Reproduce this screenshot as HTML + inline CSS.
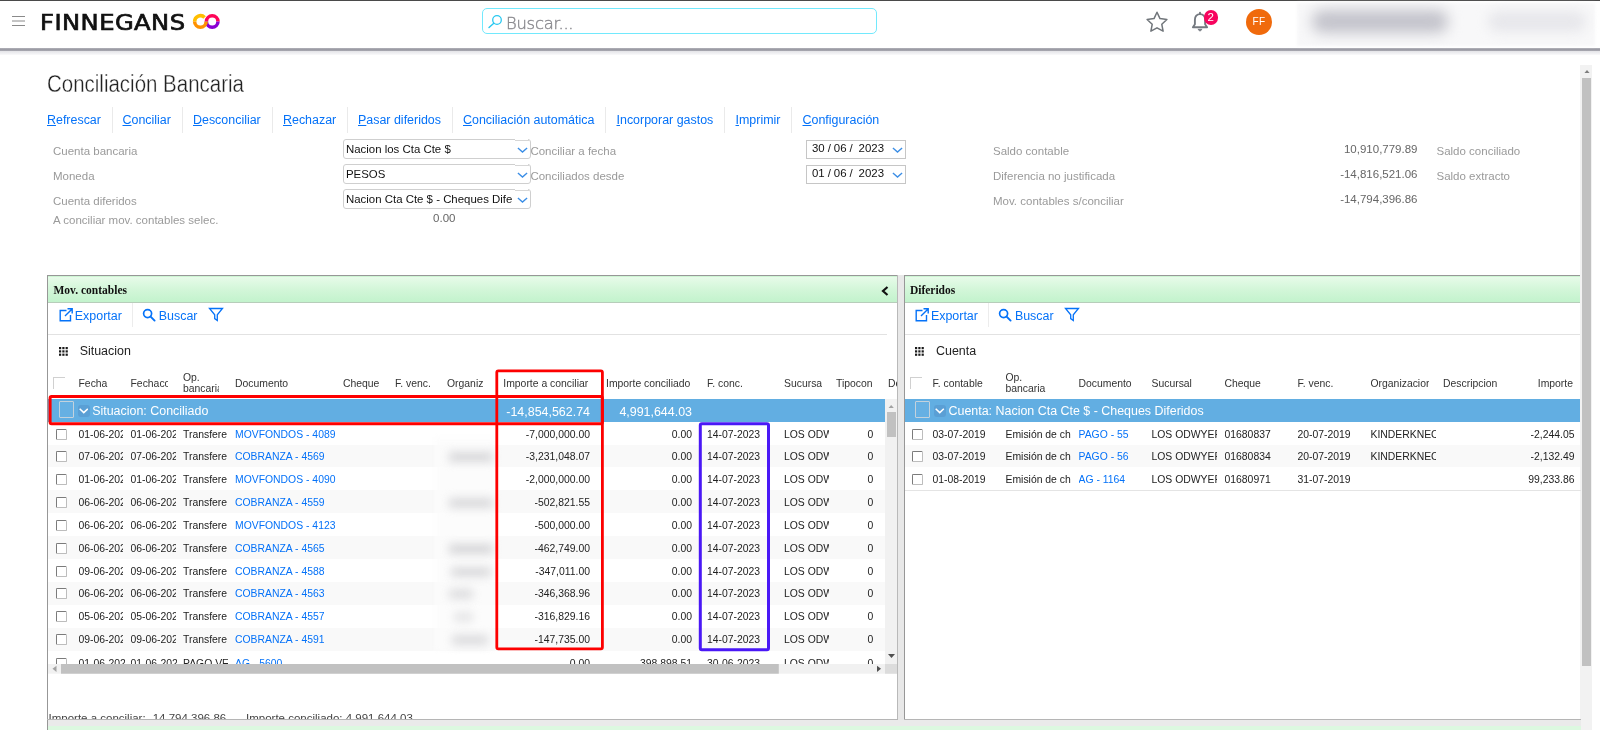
<!DOCTYPE html>
<html lang="es">
<head>
<meta charset="utf-8">
<title>Conciliación Bancaria</title>
<style>
*{box-sizing:border-box;margin:0;padding:0}
html,body{width:1600px;height:730px;overflow:hidden;background:#fff}
body{opacity:.9999;font-family:"Liberation Sans",Arial,sans-serif;font-size:12px;color:#222;position:relative}
.abs{position:absolute}
/* top bar */
#topline{left:0;top:0;width:1600px;height:1px;background:#4a4a4a}
#hdr{left:0;top:2px;width:1600px;height:46px;background:#fff}
#hdrline{left:0;top:48px;width:1600px;height:3px;background:linear-gradient(#b4b4bb,#9b9ba4 45%,#a9a9b1)}
#hdrshadow{left:0;top:51px;width:1600px;height:4px;background:linear-gradient(#e3e3e7,#eeeef1 50%,#fafafb)}
#logo{left:40px;top:10px;transform:scaleX(1.18);transform-origin:0 0;font-family:"DejaVu Sans","Liberation Sans",sans-serif;font-weight:normal;font-size:20.5px;line-height:26px;color:#111;letter-spacing:0.4px;white-space:nowrap;-webkit-text-stroke:0.7px #111}
#search{left:482px;top:8px;width:395px;height:26px;border:1px solid #72e9fd;border-radius:5px;background:#fff}
#searchtxt{left:506px;top:13px;font-family:"DejaVu Sans","Liberation Sans",sans-serif;font-weight:200;font-size:16.4px;line-height:22px;color:#8a8a8f;letter-spacing:-0.25px;-webkit-text-stroke:0.4px #8a8a8f;white-space:nowrap}
#avatar{left:1246px;top:9px;width:26px;height:26px;border-radius:50%;background:#f06a0c;color:#fff;font-size:10px;line-height:26px;text-align:center;letter-spacing:.5px}
#badge{left:1203.5px;top:10.2px;width:14.4px;height:14.4px;border-radius:50%;background:#f7045e;color:#fff;font-size:11.5px;line-height:14.6px;text-align:center}
.blur{filter:blur(4px);border-radius:8px}
/* title + menu */
#title{left:46.500px;top:71px;-webkit-text-stroke:0.35px #fff;font-size:23.3px;line-height:26px;color:#222;transform:scaleX(0.879);transform-origin:0 0;white-space:nowrap;font-weight:normal}
.mi{top:112px;font-size:12.44px;line-height:16px;color:#0572f8;white-space:nowrap}
.mi u{text-decoration:underline}
.msep{top:107px;width:1px;height:26px;background:#eaeaea}
/* form */
.lbl{font-size:11.5px;line-height:14px;color:#9a9a9a;white-space:nowrap}
.val{font-size:11.5px;line-height:14px;color:#666;white-space:nowrap;text-align:right}
.dt{word-spacing:-0.2px;line-height:14.4px !important;height:18.500px !important;border-radius:0 !important;border-color:#c6c6c6 !important}
.sel{height:20px;border:1px solid #cfcfcf;border-radius:3px;background:#fff;font-size:11.43px;line-height:18px;color:#111;padding-left:2px;white-space:nowrap;overflow:hidden}
/*PCSS*/
/* panels */
.pb{background:#979797}
.phead{height:27px;background:linear-gradient(#cdf5d3 0,#cdf5d3 1px,#e7fbe9 1.5px,#e2fae5 4px,#d2f6d8 14px,#c3f3cd 25.500px,#b7cdba 26.200px,#b7cdba 27px)}
.ptitle{font-family:"Liberation Serif","Times New Roman",serif;font-weight:bold;font-size:11.5px;line-height:14px;color:#111;white-space:nowrap}
.tb{font-size:12.44px;line-height:16px;margin-top:.6px;color:#0572f8;white-space:nowrap}
.hline{height:1px;background:#e2e2e2}
.gtxt{font-size:12.44px;line-height:16px;color:#222;white-space:nowrap}
.ch{font-size:10.4px;line-height:11px;color:#333;white-space:nowrap;overflow:hidden}
.cell{font-size:10.4px;line-height:14px;color:#222;white-space:nowrap;overflow:hidden}
.cell.r{text-align:right}
.cell.lk{color:#0572f8}
.row{left:48px;height:23px}
.grp{background:#62aee2}
.gw{font-size:12.44px;line-height:16px;color:#fff;white-space:nowrap}
.cb{width:11.500px;height:11.500px;border:1px solid;border-color:#7b7b7b #bdbdbd #bdbdbd #7b7b7b;border-radius:1.500px;background:#fff}
/*ENDPCSS*/
</style>
</head>
<body>
<div class="abs" id="hdr"></div>
<div class="abs" id="topline"></div>
<div class="abs" id="hdrline"></div>
<div class="abs" id="hdrshadow"></div>
<!-- hamburger -->
<svg class="abs" style="left:12px;top:15px" width="14" height="12" viewBox="0 0 14 12"><path d="M0 1.5h13M0 6h13M0 10.5h13" stroke="#8a8a8a" stroke-width="1" fill="none"/></svg>
<div class="abs" id="logo">FINNEGANS</div>
<div class="abs" id="search"></div>
<div class="abs" id="searchtxt">Buscar...</div>

<!-- logo infinity -->
<svg class="abs" style="left:186px;top:8px" width="40" height="26" viewBox="0 0 40 26">
<g fill="none" stroke-width="3.550">
<path d="M20.420 13.500A5.780 5.780 0 0 1 31.980 13.500" stroke="#ff0558"/>
<path d="M20.420 13.500A5.780 5.780 0 0 0 31.980 13.500" stroke="#8a00d2"/>
<path d="M8.620 13.500A5.780 5.780 0 0 1 18.600 9.550" stroke="#ffbe00"/>
<path d="M8.620 13.500A5.780 5.780 0 0 0 20.180 13.500" stroke="#ff9100"/>
</g>
</svg>
<!-- search icon -->
<svg class="abs" style="left:488px;top:14px" width="15" height="15" viewBox="0 0 15 15"><circle cx="9" cy="6" r="4.3" fill="none" stroke="#29c8f0" stroke-width="1.3"/><path d="M5.8 9.2L1 13.6" stroke="#29c8f0" stroke-width="1.4" stroke-linecap="round"/></svg>
<!-- star -->
<svg class="abs" style="left:1145px;top:10px" width="24" height="23" viewBox="0 0 24 23"><path d="M12 2.2l3 6.4 6.9.9-5.1 4.8 1.3 6.9L12 17.8 5.9 21.2l1.300-6.900L2.1 9.500l6.900-.9z" fill="none" stroke="#70757a" stroke-width="1.5" stroke-linejoin="round"/></svg>
<!-- bell -->
<svg class="abs" style="left:1190px;top:11px" width="20" height="22" viewBox="0 0 20 22"><path d="M10 3.100c-3.100 0-5.100 2.400-5.100 5.600v4.600L2.900 16.200h14.200l-2-2.900V8.700c0-3.200-2-5.600-5.100-5.600z" fill="none" stroke="#747980" stroke-width="1.900" stroke-linejoin="round"/><path d="M7.900 18.300L10 20.200l2.100-1.900z" fill="#747980" stroke="#747980" stroke-width=".8" stroke-linejoin="round"/><path d="M10 1.800v1.300" stroke="#747980" stroke-width="2" stroke-linecap="round"/></svg>
<div class="abs" style="left:1297px;top:3px;width:298px;height:43px;background:#f8f8f9;filter:blur(1.5px)"></div>
<div class="abs" style="left:1312px;top:10px;width:136px;height:23px;background:#c3c3cb;filter:blur(7px);border-radius:10px"></div>
<div class="abs" style="left:1488px;top:11px;width:98px;height:21px;background:#e7e7eb;filter:blur(6px);border-radius:10px"></div>
<div class="abs" id="avatar">FF</div>
<div class="abs" id="badge">2</div>
<div class="abs" id="title">Conciliación Bancaria</div>
<div class="abs mi" style="left:47px"><u>R</u>efrescar</div>
<div class="abs mi" style="left:122.5px"><u>C</u>onciliar</div>
<div class="abs mi" style="left:193px"><u>D</u>esconciliar</div>
<div class="abs mi" style="left:283px"><u>R</u>echazar</div>
<div class="abs mi" style="left:358px"><u>P</u>asar diferidos</div>
<div class="abs mi" style="left:463px"><u>C</u>onciliación automática</div>
<div class="abs mi" style="left:616.5px"><u>I</u>ncorporar gastos</div>
<div class="abs mi" style="left:735.5px"><u>I</u>mprimir</div>
<div class="abs mi" style="left:802.5px"><u>C</u>onfiguración</div>
<div class="abs msep" style="left:112px"></div>
<div class="abs msep" style="left:182px"></div>
<div class="abs msep" style="left:272px"></div>
<div class="abs msep" style="left:347px"></div>
<div class="abs msep" style="left:452px"></div>
<div class="abs msep" style="left:605px"></div>
<div class="abs msep" style="left:724px"></div>
<div class="abs msep" style="left:791px"></div>

<!-- form -->
<div class="abs lbl" style="left:53px;top:144px">Cuenta bancaria</div>
<div class="abs lbl" style="left:53px;top:169px">Moneda</div>
<div class="abs lbl" style="left:53px;top:194px">Cuenta diferidos</div>
<div class="abs lbl" style="left:53px;top:213px">A conciliar mov. contables selec.</div>
<div class="abs sel" style="left:343px;top:139px;width:187.500px">Nacion los Cta Cte $</div>
<div class="abs sel" style="left:343px;top:164px;width:187.500px">PESOS</div>
<div class="abs sel" style="left:343px;top:189px;width:187.500px">Nacion Cta Cte $ - Cheques Dife</div>
<svg class="abs chev" style="left:516.500px;top:146.800px" width="11" height="6.500" viewBox="0 0 12 7"><path d="M1 1l5 4.500L11 1" fill="none" stroke="#3b8ee6" stroke-width="1.500"/></svg>
<svg class="abs chev" style="left:516.500px;top:171.800px" width="11" height="6.500" viewBox="0 0 12 7"><path d="M1 1l5 4.500L11 1" fill="none" stroke="#3b8ee6" stroke-width="1.500"/></svg>
<svg class="abs chev" style="left:516.500px;top:196.800px" width="11" height="6.500" viewBox="0 0 12 7"><path d="M1 1l5 4.500L11 1" fill="none" stroke="#3b8ee6" stroke-width="1.500"/></svg>
<div class="abs" style="left:515px;top:139px;width:13px;height:1px;background:#fff"></div><div class="abs" style="left:515px;top:140px;width:14px;height:1px;background:#d6d6d6"></div>
<div class="abs" style="left:515px;top:164px;width:13px;height:1px;background:#fff"></div><div class="abs" style="left:515px;top:165px;width:14px;height:1px;background:#d6d6d6"></div>
<div class="abs" style="left:515px;top:189px;width:13px;height:1px;background:#fff"></div><div class="abs" style="left:515px;top:190px;width:14px;height:1px;background:#d6d6d6"></div>
<div class="abs val" style="left:419.500px;top:211.300px;width:36px">0.00</div>
<div class="abs lbl" style="left:530.400px;top:144px">Conciliar a fecha</div>
<div class="abs lbl" style="left:530.400px;top:169px">Conciliados desde</div>
<div class="abs sel dt" style="left:806px;top:140px;width:100px;padding-left:5px">30 / 06 /&nbsp; 2023</div>
<div class="abs sel dt" style="left:806px;top:165px;width:100px;padding-left:5px">01 / 06 /&nbsp; 2023</div>
<svg class="abs chev" style="left:892px;top:147px" width="11" height="6.500" viewBox="0 0 12 7"><path d="M1 1l5 4.500L11 1" fill="none" stroke="#3b8ee6" stroke-width="1.500"/></svg>
<svg class="abs chev" style="left:892px;top:172px" width="11" height="6.500" viewBox="0 0 12 7"><path d="M1 1l5 4.500L11 1" fill="none" stroke="#3b8ee6" stroke-width="1.500"/></svg>
<div class="abs lbl" style="left:993px;top:144px">Saldo contable</div>
<div class="abs lbl" style="left:993px;top:169px">Diferencia no justificada</div>
<div class="abs lbl" style="left:993px;top:194px">Mov. contables s/conciliar</div>
<div class="abs val" style="left:1300px;top:142px;width:117.500px">10,910,779.89</div>
<div class="abs val" style="left:1300px;top:167px;width:117.500px">-14,816,521.06</div>
<div class="abs val" style="left:1300px;top:192px;width:117.500px">-14,794,396.86</div>
<div class="abs lbl" style="left:1436.500px;top:144px">Saldo conciliado</div>
<div class="abs lbl" style="left:1436.500px;top:169px">Saldo extracto</div>
<!-- page scrollbar -->
<div class="abs" style="left:1580px;top:65px;width:12px;height:665px;background:#f2f2f2"></div>
<div class="abs" style="left:1582px;top:78px;width:9px;height:588px;background:#c1c1c1"></div>
<svg class="abs" style="left:1583.500px;top:69.800px" width="6" height="3.500" viewBox="0 0 6 3.500"><path d="M0 3.500L3 0l3 3.500z" fill="#7e7e7e"/></svg>
<!--PANELS-->
<div class="abs pb" style="left:47px;top:275px;width:851px;height:1px"></div>
<div class="abs pb" style="left:47px;top:275px;width:1px;height:455px"></div>
<div class="abs phead" style="left:48px;top:276px;width:850px"></div>
<div class="abs ptitle" style="left:53.5px;top:283px">Mov. contables</div>
<svg class="abs" style="left:881px;top:285.500px" width="8" height="10" viewBox="0 0 8 10"><path d="M6.500 1L2 5l4.500 4" fill="none" stroke="#111" stroke-width="2.200"/></svg>
<div class="abs" style="left:897px;top:275px;width:1px;height:445px;background:#b9b9b9"></div>
<div class="abs" style="left:898px;top:275px;width:6px;height:445px;background:#e8e8e8"></div>
<svg class="abs" style="left:58px;top:307px" width="16" height="16" viewBox="0 0 16 16"><path d="M8.500 3.500H2.200v10.300h10.300V8" fill="none" stroke="#0572f8" stroke-width="1.400"/><path d="M7 9L13.800 2.200M9.500 1.800h4.700v4.700" fill="none" stroke="#0572f8" stroke-width="1.400"/></svg>
<div class="abs tb" style="left:74.8px;top:307px">Exportar</div>
<div class="abs" style="left:131.5px;top:303px;width:1px;height:24px;background:#ececec"></div>
<svg class="abs" style="left:142px;top:308px" width="14" height="14" viewBox="0 0 14 14"><circle cx="5.600" cy="5.600" r="4" fill="none" stroke="#0572f8" stroke-width="1.700"/><path d="M8.600 8.600L12.600 12.600" stroke="#0572f8" stroke-width="1.900" stroke-linecap="round"/></svg>
<div class="abs tb" style="left:158.8px;top:307px">Buscar</div>
<svg class="abs" style="left:208px;top:307px" width="16" height="16" viewBox="0 0 16 16"><path d="M1.500 1.500h13L9.300 7.800v5.700L6.700 11.600V7.800z" fill="none" stroke="#0572f8" stroke-width="1.300" stroke-linejoin="miter"/></svg>
<div class="abs hline" style="left:48px;top:334px;width:839px"></div>
<svg class="abs" style="left:58.8px;top:346.8px" width="9" height="9" viewBox="0 0 9 9"><rect x="0.00" y="0.00" width="2.200" height="2.200" fill="#1a1a1a"/><rect x="0.00" y="3.30" width="2.200" height="2.200" fill="#1a1a1a"/><rect x="0.00" y="6.60" width="2.200" height="2.200" fill="#1a1a1a"/><rect x="3.30" y="0.00" width="2.200" height="2.200" fill="#1a1a1a"/><rect x="3.30" y="3.30" width="2.200" height="2.200" fill="#1a1a1a"/><rect x="3.30" y="6.60" width="2.200" height="2.200" fill="#1a1a1a"/><rect x="6.60" y="0.00" width="2.200" height="2.200" fill="#1a1a1a"/><rect x="6.60" y="3.30" width="2.200" height="2.200" fill="#1a1a1a"/><rect x="6.60" y="6.60" width="2.200" height="2.200" fill="#1a1a1a"/></svg>
<div class="abs gtxt" style="left:79.700px;top:343px">Situacion</div>
<div class="abs" style="left:53px;top:377px;width:12px;height:12px;border-top:1px solid #d0d0d0;border-left:1px solid #d0d0d0;border-radius:0"></div>
<div class="abs ch" style="left:78.5px;top:377.500px;width:46px">Fecha</div>
<div class="abs ch" style="left:130.5px;top:377.500px;width:37px">Fechacc</div>
<div class="abs ch" style="left:235px;top:377.500px;width:100px">Documento</div>
<div class="abs ch" style="left:343px;top:377.500px;width:46px">Cheque</div>
<div class="abs ch" style="left:395px;top:377.500px;width:46px">F. venc.</div>
<div class="abs ch" style="left:447px;top:377.500px;width:46px">Organiz</div>
<div class="abs ch" style="left:503.3px;top:377.500px;width:95px">Importe a conciliar</div>
<div class="abs ch" style="left:606px;top:377.500px;width:95px">Importe conciliado</div>
<div class="abs ch" style="left:707px;top:377.500px;width:70px">F. conc.</div>
<div class="abs ch" style="left:784px;top:377.500px;width:38px">Sucursa</div>
<div class="abs ch" style="left:836px;top:377.500px;width:44px">Tipocon</div>
<div class="abs ch" style="left:888px;top:377.500px;width:9px">De</div>
<div class="abs ch" style="left:183px;top:371.800px;width:36px;height:23px;white-space:normal;line-height:11.200px">Op. bancaria</div>
<div class="abs grp" style="left:48px;top:399.300px;width:837px;height:22.400px"></div>
<div class="abs" style="left:59px;top:401.200px;width:15px;height:16.500px;border:1px solid #c3d2dd;background:#66b0e3;border-radius:1px"></div>
<div class="abs" style="left:77.5px;top:405.300px;width:12px;height:11.500px;border-radius:3px;background:#5a9fd5"></div>
<svg class="abs" style="left:78.8px;top:408.200px" width="9.500" height="6" viewBox="0 0 9.500 6"><path d="M.7.800L4.750 4.600 8.800.8" fill="none" stroke="#fff" stroke-width="1.500"/></svg>
<div class="abs gw" style="left:92.2px;top:402.500px">Situacion: Conciliado</div>
<div class="abs gw" style="left:480px;top:403.500px;width:110px;text-align:right">-14,854,562.74</div>
<div class="abs gw" style="left:590px;top:403.500px;width:102px;text-align:right">4,991,644.03</div>
<div class="abs cb" style="left:55.800px;top:428.6px"></div>
<div class="abs cell" style="left:78.500px;top:428.0px;width:44px">01-06-2023</div>
<div class="abs cell" style="left:130.500px;top:428.0px;width:45px">01-06-2023</div>
<div class="abs cell" style="left:183px;top:428.0px;width:43.500px">Transferencia</div>
<div class="abs cell lk" style="left:235px;top:428.0px;width:104px">MOVFONDOS - 4089</div>
<div class="abs cell r" style="left:500px;top:428.0px;width:90px">-7,000,000.00</div>
<div class="abs cell r" style="left:620px;top:428.0px;width:72px">0.00</div>
<div class="abs cell" style="left:707px;top:428.0px;width:70px">14-07-2023</div>
<div class="abs cell" style="left:784px;top:428.0px;width:45px">LOS ODWYER</div>
<div class="abs cell r" style="left:840px;top:428.0px;width:33.200px">0</div>
<div class="abs" style="left:48px;top:445px;width:837px;height:22.0px;background:#f9f9f9"></div>
<div class="abs cb" style="left:55.800px;top:450.6px"></div>
<div class="abs cell" style="left:78.500px;top:450.0px;width:44px">07-06-2023</div>
<div class="abs cell" style="left:130.500px;top:450.0px;width:45px">07-06-2023</div>
<div class="abs cell" style="left:183px;top:450.0px;width:43.500px">Transferencia</div>
<div class="abs cell lk" style="left:235px;top:450.0px;width:104px">COBRANZA - 4569</div>
<div class="abs cell r" style="left:500px;top:450.0px;width:90px">-3,231,048.07</div>
<div class="abs cell r" style="left:620px;top:450.0px;width:72px">0.00</div>
<div class="abs cell" style="left:707px;top:450.0px;width:70px">14-07-2023</div>
<div class="abs cell" style="left:784px;top:450.0px;width:45px">LOS ODWYER</div>
<div class="abs cell r" style="left:840px;top:450.0px;width:33.200px">0</div>
<div class="abs cb" style="left:55.800px;top:473.6px"></div>
<div class="abs cell" style="left:78.500px;top:473.0px;width:44px">01-06-2023</div>
<div class="abs cell" style="left:130.500px;top:473.0px;width:45px">01-06-2023</div>
<div class="abs cell" style="left:183px;top:473.0px;width:43.500px">Transferencia</div>
<div class="abs cell lk" style="left:235px;top:473.0px;width:104px">MOVFONDOS - 4090</div>
<div class="abs cell r" style="left:500px;top:473.0px;width:90px">-2,000,000.00</div>
<div class="abs cell r" style="left:620px;top:473.0px;width:72px">0.00</div>
<div class="abs cell" style="left:707px;top:473.0px;width:70px">14-07-2023</div>
<div class="abs cell" style="left:784px;top:473.0px;width:45px">LOS ODWYER</div>
<div class="abs cell r" style="left:840px;top:473.0px;width:33.200px">0</div>
<div class="abs" style="left:48px;top:490.3px;width:837px;height:22.4px;background:#f9f9f9"></div>
<div class="abs cb" style="left:55.800px;top:496.6px"></div>
<div class="abs cell" style="left:78.500px;top:496.0px;width:44px">06-06-2023</div>
<div class="abs cell" style="left:130.500px;top:496.0px;width:45px">06-06-2023</div>
<div class="abs cell" style="left:183px;top:496.0px;width:43.500px">Transferencia</div>
<div class="abs cell lk" style="left:235px;top:496.0px;width:104px">COBRANZA - 4559</div>
<div class="abs cell r" style="left:500px;top:496.0px;width:90px">-502,821.55</div>
<div class="abs cell r" style="left:620px;top:496.0px;width:72px">0.00</div>
<div class="abs cell" style="left:707px;top:496.0px;width:70px">14-07-2023</div>
<div class="abs cell" style="left:784px;top:496.0px;width:45px">LOS ODWYER</div>
<div class="abs cell r" style="left:840px;top:496.0px;width:33.200px">0</div>
<div class="abs cb" style="left:55.800px;top:519.6px"></div>
<div class="abs cell" style="left:78.500px;top:519.0px;width:44px">06-06-2023</div>
<div class="abs cell" style="left:130.500px;top:519.0px;width:45px">06-06-2023</div>
<div class="abs cell" style="left:183px;top:519.0px;width:43.500px">Transferencia</div>
<div class="abs cell lk" style="left:235px;top:519.0px;width:104px">MOVFONDOS - 4123</div>
<div class="abs cell r" style="left:500px;top:519.0px;width:90px">-500,000.00</div>
<div class="abs cell r" style="left:620px;top:519.0px;width:72px">0.00</div>
<div class="abs cell" style="left:707px;top:519.0px;width:70px">14-07-2023</div>
<div class="abs cell" style="left:784px;top:519.0px;width:45px">LOS ODWYER</div>
<div class="abs cell r" style="left:840px;top:519.0px;width:33.200px">0</div>
<div class="abs" style="left:48px;top:536px;width:837px;height:23.0px;background:#f9f9f9"></div>
<div class="abs cb" style="left:55.800px;top:542.6px"></div>
<div class="abs cell" style="left:78.500px;top:542.0px;width:44px">06-06-2023</div>
<div class="abs cell" style="left:130.500px;top:542.0px;width:45px">06-06-2023</div>
<div class="abs cell" style="left:183px;top:542.0px;width:43.500px">Transferencia</div>
<div class="abs cell lk" style="left:235px;top:542.0px;width:104px">COBRANZA - 4565</div>
<div class="abs cell r" style="left:500px;top:542.0px;width:90px">-462,749.00</div>
<div class="abs cell r" style="left:620px;top:542.0px;width:72px">0.00</div>
<div class="abs cell" style="left:707px;top:542.0px;width:70px">14-07-2023</div>
<div class="abs cell" style="left:784px;top:542.0px;width:45px">LOS ODWYER</div>
<div class="abs cell r" style="left:840px;top:542.0px;width:33.200px">0</div>
<div class="abs cb" style="left:55.800px;top:565.6px"></div>
<div class="abs cell" style="left:78.500px;top:565.0px;width:44px">09-06-2023</div>
<div class="abs cell" style="left:130.500px;top:565.0px;width:45px">09-06-2023</div>
<div class="abs cell" style="left:183px;top:565.0px;width:43.500px">Transferencia</div>
<div class="abs cell lk" style="left:235px;top:565.0px;width:104px">COBRANZA - 4588</div>
<div class="abs cell r" style="left:500px;top:565.0px;width:90px">-347,011.00</div>
<div class="abs cell r" style="left:620px;top:565.0px;width:72px">0.00</div>
<div class="abs cell" style="left:707px;top:565.0px;width:70px">14-07-2023</div>
<div class="abs cell" style="left:784px;top:565.0px;width:45px">LOS ODWYER</div>
<div class="abs cell r" style="left:840px;top:565.0px;width:33.200px">0</div>
<div class="abs" style="left:48px;top:582.3px;width:837px;height:22.7px;background:#f9f9f9"></div>
<div class="abs cb" style="left:55.800px;top:587.6px"></div>
<div class="abs cell" style="left:78.500px;top:587.0px;width:44px">06-06-2023</div>
<div class="abs cell" style="left:130.500px;top:587.0px;width:45px">06-06-2023</div>
<div class="abs cell" style="left:183px;top:587.0px;width:43.500px">Transferencia</div>
<div class="abs cell lk" style="left:235px;top:587.0px;width:104px">COBRANZA - 4563</div>
<div class="abs cell r" style="left:500px;top:587.0px;width:90px">-346,368.96</div>
<div class="abs cell r" style="left:620px;top:587.0px;width:72px">0.00</div>
<div class="abs cell" style="left:707px;top:587.0px;width:70px">14-07-2023</div>
<div class="abs cell" style="left:784px;top:587.0px;width:45px">LOS ODWYER</div>
<div class="abs cell r" style="left:840px;top:587.0px;width:33.200px">0</div>
<div class="abs cb" style="left:55.800px;top:610.6px"></div>
<div class="abs cell" style="left:78.500px;top:610.0px;width:44px">05-06-2023</div>
<div class="abs cell" style="left:130.500px;top:610.0px;width:45px">05-06-2023</div>
<div class="abs cell" style="left:183px;top:610.0px;width:43.500px">Transferencia</div>
<div class="abs cell lk" style="left:235px;top:610.0px;width:104px">COBRANZA - 4557</div>
<div class="abs cell r" style="left:500px;top:610.0px;width:90px">-316,829.16</div>
<div class="abs cell r" style="left:620px;top:610.0px;width:72px">0.00</div>
<div class="abs cell" style="left:707px;top:610.0px;width:70px">14-07-2023</div>
<div class="abs cell" style="left:784px;top:610.0px;width:45px">LOS ODWYER</div>
<div class="abs cell r" style="left:840px;top:610.0px;width:33.200px">0</div>
<div class="abs" style="left:48px;top:628px;width:837px;height:22.5px;background:#f9f9f9"></div>
<div class="abs cb" style="left:55.800px;top:633.6px"></div>
<div class="abs cell" style="left:78.500px;top:633.0px;width:44px">09-06-2023</div>
<div class="abs cell" style="left:130.500px;top:633.0px;width:45px">09-06-2023</div>
<div class="abs cell" style="left:183px;top:633.0px;width:43.500px">Transferencia</div>
<div class="abs cell lk" style="left:235px;top:633.0px;width:104px">COBRANZA - 4591</div>
<div class="abs cell r" style="left:500px;top:633.0px;width:90px">-147,735.00</div>
<div class="abs cell r" style="left:620px;top:633.0px;width:72px">0.00</div>
<div class="abs cell" style="left:707px;top:633.0px;width:70px">14-07-2023</div>
<div class="abs cell" style="left:784px;top:633.0px;width:45px">LOS ODWYER</div>
<div class="abs cell r" style="left:840px;top:633.0px;width:33.200px">0</div>
<div class="abs" style="left:435px;top:437px;width:60px;height:213px;background:#fcfcfc;opacity:.75;filter:blur(2px)"></div>
<div class="abs" style="left:449px;top:451.5px;width:44px;height:10px;background:#cfcfd2;opacity:0.81;filter:blur(5px)"></div>
<div class="abs" style="left:449px;top:497.5px;width:44px;height:10px;background:#cfcfd2;opacity:0.77;filter:blur(5px)"></div>
<div class="abs" style="left:449px;top:543.5px;width:44px;height:10px;background:#cfcfd2;opacity:0.85;filter:blur(5px)"></div>
<div class="abs" style="left:451px;top:566.5px;width:40px;height:10px;background:#cfcfd2;opacity:0.77;filter:blur(5px)"></div>
<div class="abs" style="left:449px;top:588.5px;width:24px;height:10px;background:#cfcfd2;opacity:0.68;filter:blur(5px)"></div>
<div class="abs" style="left:454px;top:611.5px;width:19px;height:10px;background:#cfcfd2;opacity:0.51;filter:blur(5px)"></div>
<div class="abs" style="left:452px;top:634.5px;width:36px;height:10px;background:#cfcfd2;opacity:0.72;filter:blur(5px)"></div>
<div class="abs" style="left:48px;top:650.3px;width:837px;height:13.7px;overflow:hidden"><div class="abs cb" style="left:7.800px;top:8.200px"></div><div class="abs cell" style="left:30.500px;top:7.100px;width:46px">01-06-2023</div><div class="abs cell" style="left:82.500px;top:7.100px;width:46px">01-06-2023</div><div class="abs cell" style="left:135px;top:7.100px;width:44.500px">PAGO VEP</div><div class="abs cell lk" style="left:187px;top:7.100px;width:104px">AG - 5600</div><div class="abs cell r" style="left:452px;top:7.100px;width:90px">0.00</div><div class="abs cell r" style="left:572px;top:7.100px;width:72px">398,898.51</div><div class="abs cell" style="left:659px;top:7.100px;width:70px">30-06-2023</div><div class="abs cell" style="left:736px;top:7.100px;width:45px">LOS ODWYER</div><div class="abs cell r" style="left:792px;top:7.100px;width:33.200px">0</div></div>
<div class="abs" style="left:885px;top:399px;width:12px;height:265px;background:#f1f1f1"></div>
<svg class="abs" style="left:888.300px;top:404.600px" width="6.400" height="3.400" viewBox="0 0 7 4"><path d="M0 4L3.500 0 7 4z" fill="#a2a2a2"/></svg>
<div class="abs" style="left:887px;top:412px;width:9px;height:24.500px;background:#c1c1c1"></div>
<svg class="abs" style="left:888px;top:654px" width="7" height="4" viewBox="0 0 7 4"><path d="M0 0L3.500 4 7 0z" fill="#505050"/></svg>
<svg class="abs" style="left:48px;top:660px" width="850" height="16" viewBox="0 0 850 16"><rect x="0" y="4" width="849" height="9.700" fill="#f1f1f1"/><rect x="13" y="4" width="717.800" height="9.700" fill="#c1c1c1"/><rect x="837" y="4" width="12" height="9.700" fill="#dcdcdc"/><path d="M8.500 5.700L4.500 8.800 8.500 11.900z" fill="#a3a3a3"/><path d="M829 5.700L833 8.800 829 11.900z" fill="#505050"/></svg>
<div class="abs" style="left:48px;top:700px;width:849px;height:19.300px;overflow:hidden"><div class="abs cell" style="left:.5px;top:10.800px;font-size:11.5px;color:#444">Importe a conciliar: -14,794,396.86</div><div class="abs cell" style="left:198px;top:10.800px;font-size:11.5px;color:#444">Importe conciliado: 4,991,644.03</div></div>
<div class="abs" style="left:47px;top:719.300px;width:851px;height:1px;background:#b5b5b5"></div>
<div class="abs pb" style="left:904px;top:275px;width:676px;height:1px"></div>
<div class="abs pb" style="left:904px;top:275px;width:1px;height:455px"></div>
<div class="abs phead" style="left:905px;top:276px;width:675px"></div>
<div class="abs ptitle" style="left:909.9px;top:283px">Diferidos</div>
<svg class="abs" style="left:914.1px;top:307px" width="16" height="16" viewBox="0 0 16 16"><path d="M8.500 3.500H2.200v10.300h10.300V8" fill="none" stroke="#0572f8" stroke-width="1.400"/><path d="M7 9L13.800 2.200M9.500 1.800h4.700v4.700" fill="none" stroke="#0572f8" stroke-width="1.400"/></svg>
<div class="abs tb" style="left:930.9px;top:307px">Exportar</div>
<div class="abs" style="left:987.6px;top:303px;width:1px;height:24px;background:#ececec"></div>
<svg class="abs" style="left:998.1px;top:308px" width="14" height="14" viewBox="0 0 14 14"><circle cx="5.600" cy="5.600" r="4" fill="none" stroke="#0572f8" stroke-width="1.700"/><path d="M8.600 8.600L12.600 12.600" stroke="#0572f8" stroke-width="1.900" stroke-linecap="round"/></svg>
<div class="abs tb" style="left:1014.9px;top:307px">Buscar</div>
<svg class="abs" style="left:1064.1px;top:307px" width="16" height="16" viewBox="0 0 16 16"><path d="M1.500 1.500h13L9.300 7.800v5.700L6.700 11.600V7.800z" fill="none" stroke="#0572f8" stroke-width="1.300" stroke-linejoin="miter"/></svg>
<div class="abs hline" style="left:905px;top:334px;width:675px"></div>
<svg class="abs" style="left:915px;top:346.8px" width="9" height="9" viewBox="0 0 9 9"><rect x="0.00" y="0.00" width="2.200" height="2.200" fill="#1a1a1a"/><rect x="0.00" y="3.30" width="2.200" height="2.200" fill="#1a1a1a"/><rect x="0.00" y="6.60" width="2.200" height="2.200" fill="#1a1a1a"/><rect x="3.30" y="0.00" width="2.200" height="2.200" fill="#1a1a1a"/><rect x="3.30" y="3.30" width="2.200" height="2.200" fill="#1a1a1a"/><rect x="3.30" y="6.60" width="2.200" height="2.200" fill="#1a1a1a"/><rect x="6.60" y="0.00" width="2.200" height="2.200" fill="#1a1a1a"/><rect x="6.60" y="3.30" width="2.200" height="2.200" fill="#1a1a1a"/><rect x="6.60" y="6.60" width="2.200" height="2.200" fill="#1a1a1a"/></svg>
<div class="abs gtxt" style="left:936px;top:343px">Cuenta</div>
<div class="abs" style="left:910px;top:377px;width:12px;height:12px;border-top:1px solid #d0d0d0;border-left:1px solid #d0d0d0;border-radius:0"></div>
<div class="abs ch" style="left:932.5px;top:377.500px;width:68px">F. contable</div>
<div class="abs ch" style="left:1078.5px;top:377.500px;width:70px">Documento</div>
<div class="abs ch" style="left:1151.5px;top:377.500px;width:70px">Sucursal</div>
<div class="abs ch" style="left:1224.5px;top:377.500px;width:70px">Cheque</div>
<div class="abs ch" style="left:1297.5px;top:377.500px;width:70px">F. venc.</div>
<div class="abs ch" style="left:1370.5px;top:377.500px;width:58px">Organizacion</div>
<div class="abs ch" style="left:1443px;top:377.500px;width:70px">Descripcion</div>
<div class="abs ch" style="left:1005.500px;top:371.800px;width:50px;height:23px;white-space:normal;line-height:11.200px">Op. bancaria</div>
<div class="abs ch" style="left:1500px;top:377.500px;width:73px;text-align:right">Importe</div>
<div class="abs grp" style="left:905px;top:399.300px;width:675px;height:22.400px"></div>
<div class="abs" style="left:915.3px;top:401.200px;width:15px;height:16.500px;border:1px solid #c3d2dd;background:#66b0e3;border-radius:1px"></div>
<div class="abs" style="left:933.8px;top:405.300px;width:12px;height:11.500px;border-radius:3px;background:#5a9fd5"></div>
<svg class="abs" style="left:935.0999999999999px;top:408.200px" width="9.500" height="6" viewBox="0 0 9.500 6"><path d="M.7.800L4.750 4.600 8.800.8" fill="none" stroke="#fff" stroke-width="1.500"/></svg>
<div class="abs gw" style="left:948.5px;top:402.500px">Cuenta: Nacion Cta Cte $ - Cheques Diferidos</div>
<div class="abs cb" style="left:911.500px;top:428.6px"></div>
<div class="abs cell" style="left:932.500px;top:428.0px;width:68px">03-07-2019</div>
<div class="abs cell" style="left:1005.500px;top:428.0px;width:65.500px">Emisión de cheque</div>
<div class="abs cell lk" style="left:1078.500px;top:428.0px;width:68px">PAGO - 55</div>
<div class="abs cell" style="left:1151.500px;top:428.0px;width:65.500px">LOS ODWYER</div>
<div class="abs cell" style="left:1224.500px;top:428.0px;width:68px">01680837</div>
<div class="abs cell" style="left:1297.500px;top:428.0px;width:68px">20-07-2019</div>
<div class="abs cell" style="left:1370.500px;top:428.0px;width:65.500px">KINDERKNECHT</div>
<div class="abs cell r" style="left:1500px;top:428.0px;width:74.500px">-2,244.05</div>
<div class="abs" style="left:905px;top:445.2px;width:675px;height:22.099999999999998px;background:#f9f9f9"></div>
<div class="abs cb" style="left:911.500px;top:450.6px"></div>
<div class="abs cell" style="left:932.500px;top:450.0px;width:68px">03-07-2019</div>
<div class="abs cell" style="left:1005.500px;top:450.0px;width:65.500px">Emisión de cheque</div>
<div class="abs cell lk" style="left:1078.500px;top:450.0px;width:68px">PAGO - 56</div>
<div class="abs cell" style="left:1151.500px;top:450.0px;width:65.500px">LOS ODWYER</div>
<div class="abs cell" style="left:1224.500px;top:450.0px;width:68px">01680834</div>
<div class="abs cell" style="left:1297.500px;top:450.0px;width:68px">20-07-2019</div>
<div class="abs cell" style="left:1370.500px;top:450.0px;width:65.500px">KINDERKNECHT</div>
<div class="abs cell r" style="left:1500px;top:450.0px;width:74.500px">-2,132.49</div>
<div class="abs cb" style="left:911.500px;top:473.6px"></div>
<div class="abs cell" style="left:932.500px;top:473.0px;width:68px">01-08-2019</div>
<div class="abs cell" style="left:1005.500px;top:473.0px;width:65.500px">Emisión de cheque</div>
<div class="abs cell lk" style="left:1078.500px;top:473.0px;width:68px">AG - 1164</div>
<div class="abs cell" style="left:1151.500px;top:473.0px;width:65.500px">LOS ODWYER</div>
<div class="abs cell" style="left:1224.500px;top:473.0px;width:68px">01680971</div>
<div class="abs cell" style="left:1297.500px;top:473.0px;width:68px">31-07-2019</div>
<div class="abs cell" style="left:1370.500px;top:473.0px;width:65.500px"></div>
<div class="abs cell r" style="left:1500px;top:473.0px;width:74.500px">99,233.86</div>
<div class="abs hline" style="left:905px;top:489.500px;width:676px;background:#e4e4e4"></div>
<div class="abs" style="left:904px;top:719.300px;width:677px;height:1px;background:#b5b5b5"></div>
<div class="abs" style="left:48px;top:720.300px;width:1533px;height:6px;background:#eaeaea"></div>
<div class="abs" style="left:48px;top:726px;width:1533px;height:4px;background:#dcf8e0"></div>
<div class="abs pb" style="left:47px;top:720px;width:1px;height:10px"></div>
<svg class="abs" style="left:0;top:0;pointer-events:none" width="1600" height="730" viewBox="0 0 1600 730"><rect x="50.10" y="396.50" width="552.20" height="27.30" rx="1.500" fill="none" stroke="#fd0000" stroke-width="3"/></svg>
<svg class="abs" style="left:0;top:0;pointer-events:none" width="1600" height="730" viewBox="0 0 1600 730"><rect x="496.80" y="370.80" width="105.60" height="278.00" rx="1.500" fill="none" stroke="#fd0000" stroke-width="2.8"/></svg>
<svg class="abs" style="left:0;top:0;pointer-events:none" width="1600" height="730" viewBox="0 0 1600 730"><rect x="700.30" y="423.80" width="68.20" height="226.00" rx="1.500" fill="none" stroke="#4a18f6" stroke-width="3"/></svg>
<!--ENDPANELS-->
</body>
</html>
